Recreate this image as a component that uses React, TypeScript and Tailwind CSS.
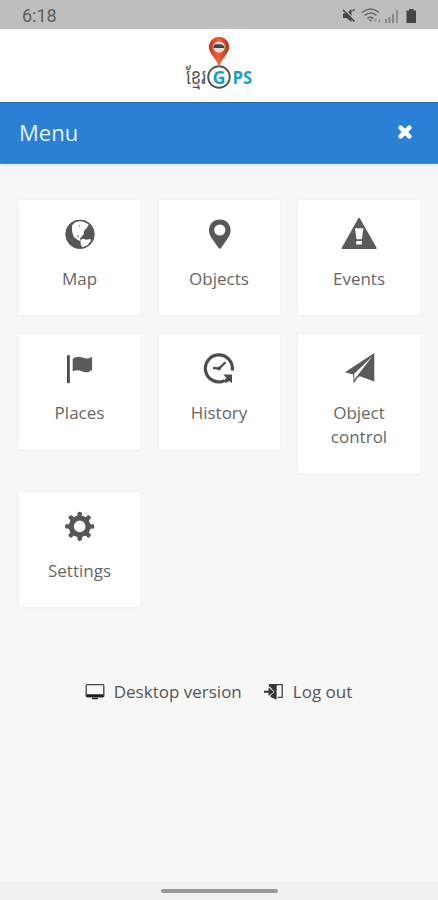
import type { ReactNode } from "react";

const GlobeIcon = () => (
    <svg viewBox="0 0 36 36" className="size-9">
        <circle cx="18" cy="18.3" r="14.4" fill="#575757" />
        <path
            d="M10.400 8.800l3.600-3.100 4.400-.9 3.600.6 2.500 1.600 2.600 1-1 1.400-1.600 3-2.200 2.200-.8 4-2.400 2.600-1.200 1.600.4 2.200-2.800-1-3.600-3-1.600-4.400-.4-4.200z"
            fill="#fff"
        />
        <path d="M18.400 23.800l3.200-1 2.200 1 4.800-.8.200 1.800-3 4.400-5.400 2.200-1.600-2.800z" fill="#fff" />
        <path d="M16.500 9.200l2 .4-.6 1.400zM14.800 19.600l2.400.2-1 1.400z" fill="#575757" />
        <circle cx="18" cy="18.300" r="13.800" fill="none" stroke="#575757" strokeWidth="1.300" />
    </svg>
);

const PinIcon = () => (
    <svg viewBox="0 0 36 36" className="size-9">
        <path
            d="M18.8 3.500c6.200 0 10.800 4.600 10.800 10.700 0 3.200-1.300 5.800-3.100 8.500l-6.500 9.200c-.7 1-1.700 1-2.400 0L11.100 22.700c-1.800-2.700-3.100-5.300-3.100-8.500C8 8.100 12.600 3.500 18.800 3.500z"
            fill="#575757"
        />
        <circle cx="18.8" cy="14" r="5.600" fill="#fff" />
    </svg>
);

const WarningIcon = () => (
    <svg viewBox="0 0 36 36" className="size-9">
        <path d="M18.100 1.800a1 1 0 0 1 .9.600L35.600 31.800v1.300H.8v-1.300L17.200 2.400a1 1 0 0 1 .9-.6z" fill="#5a5a5a" />
        <path d="M14 12.200h8.400l-1.500 11h-5.400zM15.300 25h5.500v3.600h-5.500z" fill="#fff" />
    </svg>
);

const FlagIcon = () => (
    <svg viewBox="0 0 36 36" className="size-9">
        <path d="M5 5.200h2.800v28H5z" fill="#4c4c4c" />
        <path
            d="M10.700 8.900c3.300-2.700 6.300-2.700 9.800-1.400 3.500 1.400 6.300 1.300 9.600-.8v13.100c-3.200 2.800-6.800 3.300-10.300 1.500-3-1.500-6-1.500-9.100.2z"
            fill="#5a5a5a"
        />
    </svg>
);

const HistoryIcon = () => (
    <svg viewBox="0 0 36 36" className="size-9">
        <path d="M31.200 20.600A13.500 13.500 0 1 0 23.600 30.600" fill="none" stroke="#4c4c4c" strokeWidth="3.200" />
        <path d="M22.300 24.500h8.700v8.800l-2.500-2.200-3.900 1.900-1.500-2.700 2.300-2.400z" fill="#4c4c4c" />
        <path d="M12 17.800l6 .8 6.500-6.400" fill="none" stroke="#4c4c4c" strokeWidth="2.300" />
        <circle cx="18" cy="18.400" r="1.900" fill="#4c4c4c" />
    </svg>
);

const PlaneIcon = () => (
    <svg viewBox="0 0 36 36" className="size-9">
        <path d="M33.300 3L4 22.200l8.200 2.300.4 9 4.400-6.200 1.900-1.100 14.400 5.400z" fill="#5a5a5a" />
        <path d="M31.300 6.300L13.300 23.800v6z" fill="#fff" />
    </svg>
);

const GearIcon = () => (
    <svg viewBox="-18 -18 36 36" className="size-9">
        <g fill="#575757">
            {[0, 45, 90, 135, 180, 225, 270, 315].map((deg) => (
                <path
                    key={deg}
                    d="M-4.300-8.500l2.300-2.700-.4-1.500q.2-2 2.400-2t2.400 2l-.4 1.500 2.300 2.700z"
                    transform={`translate(-.3 .4) rotate(${deg})`}
                />
            ))}
        </g>
        <circle cx="-.3" cy=".4" r="8.300" fill="none" stroke="#575757" strokeWidth="5" />
    </svg>
);

const Logo = () => (
    <svg viewBox="0 0 80 60" className="h-[60px] w-20">
        <defs>
            <linearGradient id="pin" x1="0" x2="1">
                <stop offset="0" stopColor="#c9371d" />
                <stop offset=".45" stopColor="#f0603a" />
                <stop offset="1" stopColor="#bd3219" />
            </linearGradient>
        </defs>
        <circle cx="40" cy="43" r="10.800" fill="#fff" stroke="#555" strokeWidth="1.900" />
        <path d="M40 33.500C38.500 25 29.800 20.500 29.800 12.800a10.200 10 0 0 1 20.400 0C50.200 20.500 41.500 25 40 33.500z" fill="url(#pin)" />
        <ellipse cx="40" cy="13" rx="6" ry="5.600" fill="#deded8" />
        <path d="M34.500 12l1.500-1.700h6l3.200 1.600v2.200H34.500z" fill="#444" />
        <text
            x="7"
            y="0"
            transform="translate(0 49.500) scale(1 1.300)"
            textLength="20"
            lengthAdjust="spacingAndGlyphs"
            fill="#555"
            className="font-['Noto_Sans_Khmer','Khmer_OS','Noto_Sans',sans-serif] text-[17px]"
        >
            ខ្មែរ
        </text>
        <text x="40" y="49.500" textAnchor="middle" fill="#179fcb" className="font-['Open_Sans',sans-serif] text-[18px] font-bold">
            G
        </text>
        <text x="53.500" y="49.500" textLength="19.500" lengthAdjust="spacingAndGlyphs" fill="#179fcb" className="font-['Open_Sans',sans-serif] text-[17px] font-bold">
            PS
        </text>
    </svg>
);

const StatusIcons = () => (
    <svg viewBox="0 0 80 20" className="h-5 w-20">
        <path d="M5 7.500h3.500L13.500 3v13L8.500 12H5z" fill="#444" />
        <path d="M5.500 2.500l12 12" stroke="#bebebe" strokeWidth="1.500" />
        <path d="M5 4l11.500 11.500M14.500 5l2-1.500" stroke="#444" strokeWidth="1.500" />
        <g fill="none" stroke="#666" strokeWidth="1.500">
            <path d="M24 6.500q8.500-7 17 0M26.500 9.500q6-5 12 0M29.500 12.500q3-2.700 6 0" />
        </g>
        <path d="M30.500 13.500h4l-2 2.200z" fill="#666" />
        <path d="M36 13l1.500 3 1.500-3zM40 16l1.500-3 1.500 3z" fill="#8a8a8a" />
        <g fill="#858585">
            <path d="M47 13h2v4h-2zM50.500 11h2v6h-2zM54 8h2v9h-2z" />
            <path d="M58 4h2v13h-2z" fill="#8f8f8f" />
        </g>
        <path d="M71 3h4.500v1.500H78V17h-9.500V4.500H71z" fill="#444" />
    </svg>
);

const MonitorIcon = () => (
    <svg viewBox="0 0 20 18" className="h-[18px] w-5">
        <rect x="1.200" y="1.700" width="17.600" height="12" rx="1" fill="none" stroke="#444" strokeWidth="1.300" />
        <path d="M1.500 11.200h17v3h-17zM7 14.700h6v1.600H7z" fill="#222" />
    </svg>
);

const LogoutIcon = () => (
    <svg viewBox="0 0 20 18" className="h-[18px] w-5">
        <path d="M0 7.800h4.500V4.500l5.300 4.300-5.300 4.300V9.800H0z" fill="#333" />
        <path d="M5.500 4V1.700h12.700v12.600h-4.500" fill="none" stroke="#444" strokeWidth="1.300" />
        <path d="M5.500 1.200h8.500l-1.400 2v13.500l-6.100-2.700v-1.500l4-3.700-4-4.300z" fill="#333" />
    </svg>
);

const items: { label: string; icon: ReactNode }[] = [
    { label: "Map", icon: <GlobeIcon /> },
    { label: "Objects", icon: <PinIcon /> },
    { label: "Events", icon: <WarningIcon /> },
    { label: "Places", icon: <FlagIcon /> },
    { label: "History", icon: <HistoryIcon /> },
    { label: "Object control", icon: <PlaneIcon /> },
    { label: "Settings", icon: <GearIcon /> },
];

export default function App() {
    return (
        <div className="flex h-[900px] w-[438px] flex-col overflow-hidden bg-[#f7f7f7] font-['Open_Sans',sans-serif] text-[#666]">
            {/* status bar */}
            <div className="flex h-[29px] shrink-0 items-center justify-between bg-[#bebebe] pt-[3px] pr-[20px] pl-[22px]">
                <span className="font-[Roboto,sans-serif] text-[18px] leading-6 text-[#5c5c5c]">6:18</span>
                <StatusIcons />
            </div>

            <header className="flex h-[73px] shrink-0 justify-center bg-white pt-[5px]">
                <Logo />
            </header>

            <div className="flex h-[62px] shrink-0 items-center justify-between border-t border-b border-t-[#236cad] border-b-[#4a8fd3] bg-[#2a80d5] pr-[25px] pb-[2px] pl-[19px] shadow-sm">
                <h1 className="text-[22px] leading-8 text-[#e6f3ff]">Menu</h1>
                <button aria-label="Close">
                    <svg viewBox="0 0 16 16" className="size-4">
                        <path d="M3.600 3.600l8.800 8.800M12.400 3.600l-8.800 8.800" stroke="#fff" strokeWidth="4.600" strokeLinecap="round" />
                    </svg>
                </button>
            </div>

            <nav className="mt-9 grid grid-cols-[121px_121px_122px] items-start gap-x-[18.5px] gap-y-[19px] pl-[19px]">
                {items.map((item) => (
                    <a
                        key={item.label}
                        className="flex flex-col items-center bg-white px-5 pt-4 pb-6 text-center shadow-[0_0_5px_rgba(0,0,0,0.04)]"
                    >
                        {item.icon}
                        <span className="mt-[15px] text-[17px] leading-6">{item.label}</span>
                    </a>
                ))}
            </nav>

            <div className="mt-[73px] flex items-center justify-center gap-[22px] pr-px text-[17px] leading-6 text-[#555]">
                <a className="flex items-center gap-[9px]">
                    <MonitorIcon />
                    Desktop version
                </a>
                <a className="flex items-center gap-[9px]">
                    <LogoutIcon />
                    Log out
                </a>
            </div>

            {/* gesture bar */}
            <div className="mt-auto flex h-[18px] shrink-0 items-center justify-center bg-[#f1f1f1]">
                <div className="h-1 w-[117px] rounded-full bg-[#999]" />
            </div>
        </div>
    );
}
